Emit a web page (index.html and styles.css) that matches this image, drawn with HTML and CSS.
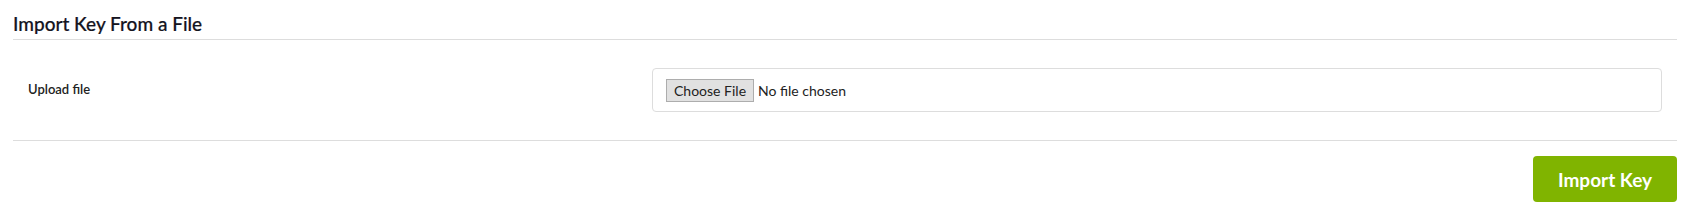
FILE: index.html
```html
<!DOCTYPE html>
<html lang="en">
<head>
    <meta charset="UTF-8">
    <title>Import Key</title>
    <link rel="stylesheet" href="styles.css">
</head>
<body>
    <div class="panel">
        <h2 class="panel-title">Import Key From a File</h2>

        <!-- upload row -->
        <div class="form-row">
            <label class="form-label" for="keyFile">Upload file</label>
            <div class="file-box">
                <input type="file" id="keyFile" name="keyFile">
            </div>
        </div>

        <hr class="divider">

        <div class="actions">
            <button type="submit" class="btn-import">Import Key</button>
        </div>
    </div>
</body>
</html>
```

FILE: styles.css
```css
body {
    font-family: Lato, "Open Sans", Arial, sans-serif;
    background-color: #fff;
    color: #222;
    margin: 0;
    padding: 0;
}
.panel {
    padding: 12px 29px 0 13px;
}
.panel-title {
    font-size: 19px;
    font-weight: 500;
    line-height: 24px;
    margin: 0;
    padding-bottom: 3px;
    border-bottom: 1px solid #ddd;
    color: #14141e;
    -webkit-text-stroke: 0.2px #14141e;
}
.form-row {
    display: grid;
    grid-template-columns: 639px 1fr;
    align-items: center;
    margin-top: 28px;
    padding-right: 15px;
}
.form-label {
    font-size: 13px;
    font-weight: 600;
    padding-left: 15px;
    padding-bottom: 3px;
}
.file-box {
    height: 44px;
    box-sizing: border-box;
    border: 1px solid #ddd;
    border-radius: 4px;
    display: flex;
    align-items: center;
    padding-left: 13px;
}
.file-box input[type="file"] {
    font-family: Lato, Arial, sans-serif;
    font-size: 14px;
    color: #222;
}
.file-box input[type="file"]::file-selector-button {
    font-family: Lato, Arial, sans-serif;
    font-size: 14px;
    height: 23px;
    padding: 0 7px;
    margin-right: 4px;
    background-color: #e1e1e1;
    border: 1px solid #adadad;
    border-radius: 0;
    color: #222;
}
.divider {
    border: none;
    border-top: 1px solid #ddd;
    margin: 28px 0 0 0;
}
.actions {
    display: flex;
    justify-content: flex-end;
    margin-top: 15px;
}
.btn-import {
    width: 144px;
    height: 46px;
    background-color: #80b400;
    color: #fff;
    border: none;
    border-radius: 4px;
    font-family: Lato, Arial, sans-serif;
    font-size: 19px;
    font-weight: 700;
    cursor: pointer;
}
```
